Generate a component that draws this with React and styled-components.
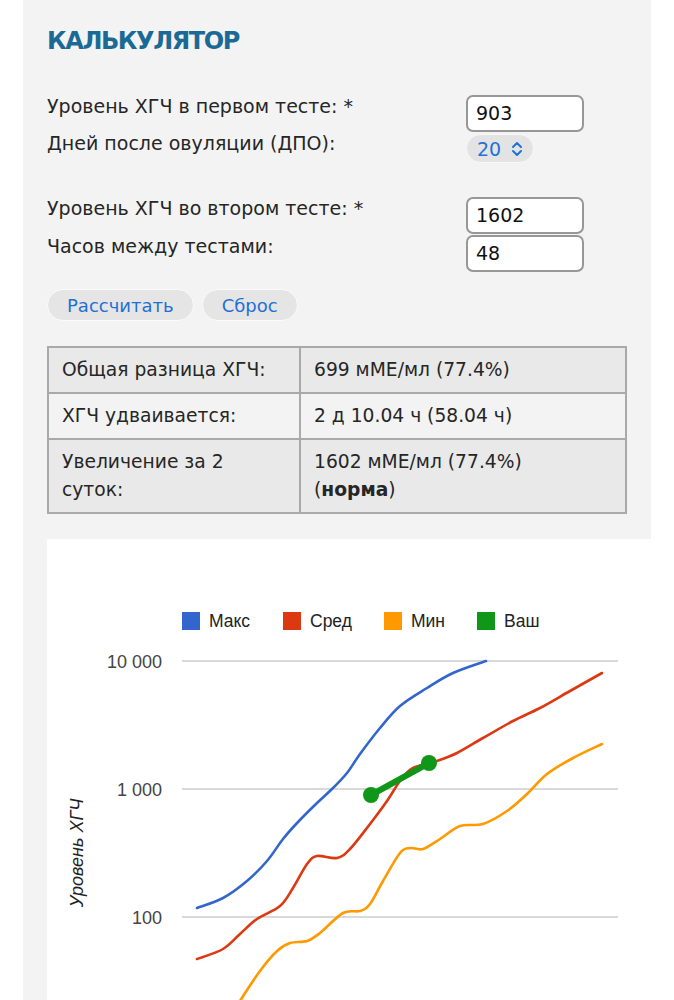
import React from 'react'
import styled, { createGlobalStyle } from 'styled-components'

const GlobalStyle = createGlobalStyle`
  body {
    margin: 0;
    background: #ffffff;
    font-family: "DejaVu Sans", Verdana, sans-serif;
    color: #262626;
  }
`

const Panel = styled.div`
  margin-left: 23px;
  width: 628px;
  background: #f3f3f3;
  padding: 26px 0 0 24px;
  box-sizing: border-box;
`

const Content = styled.div`
  padding-right: 24px;
`

const Title = styled.h2`
  margin: 0 0 39px;
  font-size: 24px;
  line-height: 30px;
  font-weight: bold;
  letter-spacing: -1.4px;
  color: #1b6a96;
`

const Group = styled.div`
  display: flex;
  flex-direction: column;
  gap: ${p => p.$gap || 0}px;
  margin-bottom: ${p => p.$after || 0}px;
`

const Row = styled.div`
  display: flex;
  align-items: flex-start;
`

const Label = styled.div`
  width: 419px;
  font-size: 19px;
  line-height: 22px;
  margin-top: ${p => p.$shift || 0}px;
`

const Input = styled.div`
  width: 118px;
  height: 37px;
  box-sizing: border-box;
  border: 2px solid #979797;
  border-radius: 7px;
  background: #fff;
  padding-left: 8px;
  font-size: 19px;
  line-height: 33px;
  color: #111;
`

const Select = styled.div`
  display: flex;
  align-items: center;
  gap: 10px;
  height: 29px;
  box-sizing: border-box;
  padding: 0 10px;
  border-radius: 15px;
  border: 1px solid #f8f8f8;
  background: #e3e3e3;
  color: #1f72d8;
  font-size: 19px;
`

const Buttons = styled.div`
  display: flex;
  gap: 8px;
  margin-bottom: 25px;
`

const Button = styled.button`
  height: 32px;
  margin: 0;
  padding: 0 19px;
  border-radius: 16px;
  border: 1px solid #fbfbfb;
  background: #e5e5e5;
  color: #1f70d6;
  font-family: "DejaVu Sans", Verdana, sans-serif;
  font-size: 18px;
`

const Table = styled.table`
  width: 580px;
  border-collapse: collapse;
  font-size: 18.7px;
  line-height: 28px;
`

const Cell = styled.td`
  border: 2px solid #a9a9a9;
  padding: ${p => (p.$first ? '8px 13px' : '8px 30px 8px 13px')};
  vertical-align: top;
  width: ${p => (p.$first ? '224px' : 'auto')};
  background: ${p => (p.$light ? '#f3f3f3' : '#e9e9e9')};
`

const ChartBox = styled.div`
  margin-top: 25px;
  background: #ffffff;
  height: 470px;
`

const ChartSvg = styled.svg`
  display: block;
  font-family: "Liberation Sans", Arial, sans-serif;
`

function smooth(pts) {
  let d = `M${pts[0][0]},${pts[0][1]}`
  for (let i = 0; i < pts.length - 1; i++) {
    const p0 = pts[i - 1] || pts[i]
    const p1 = pts[i]
    const p2 = pts[i + 1]
    const p3 = pts[i + 2] || p2
    const c1x = p1[0] + (p2[0] - p0[0]) / 6
    const c1y = p1[1] + (p2[1] - p0[1]) / 6
    const c2x = p2[0] - (p3[0] - p1[0]) / 6
    const c2y = p2[1] - (p3[1] - p1[1]) / 6
    d += ` C${c1x},${c1y} ${c2x},${c2y} ${p2[0]},${p2[1]}`
  }
  return d
}

const series = [
  {
    color: '#3366cc',
    pts: [[197,907],[223,897],[247,880],[267,860],[283,838],[298,821],[317,802],[333,787],[347,772],[360,753],[380,727],[400,705],[427,687],[453,672],[486,660]],
  },
  {
    color: '#dc3912',
    pts: [[197,958],[223,948],[240,933],[257,918],[280,905],[293,887],[307,863],[317,855],[337,857],[350,848],[370,823],[387,800],[400,780],[413,767],[437,760],[457,752],[483,737],[513,720],[540,707],[570,690],[602,672]],
  },
  {
    color: '#ff9900',
    pts: [[222,1030],[240,1000],[260,970],[277,950],[290,942],[307,940],[320,932],[343,912],[360,910],[370,903],[383,880],[400,852],[410,847],[423,848],[440,838],[460,825],[483,823],[507,810],[527,793],[547,773],[573,757],[602,743]],
  },
]

const legend = [
  { color: '#3366cc', label: 'Макс', x: 182 },
  { color: '#dc3912', label: 'Сред', x: 283 },
  { color: '#ff9900', label: 'Мин', x: 384 },
  { color: '#109618', label: 'Ваш', x: 477 },
]

const ticks = [
  { y: 660, label: '10 000' },
  { y: 788, label: '1 000' },
  { y: 916, label: '100' },
]

function Chart() {
  return (
    <ChartSvg width="604" height="470" viewBox="47 538 604 470">
      {legend.map(l => (
        <g key={l.label}>
          <rect x={l.x} y={611} width="18" height="18" fill={l.color} />
          <text x={l.x + 27} y={626} fontSize="17.5" fill="#222">{l.label}</text>
        </g>
      ))}
      {ticks.map(t => (
        <g key={t.label}>
          <line x1="182" x2="618" y1={t.y} y2={t.y} stroke="#cccccc" strokeWidth="1.5" />
          <text x="162" y={t.y + 6.5} fontSize="18" fill="#444" textAnchor="end">{t.label}</text>
        </g>
      ))}
      <text
        x="77"
        y="852"
        fontSize="18"
        fontStyle="italic"
        fill="#222"
        textAnchor="middle"
        transform="rotate(-90 77 852)"
        dy="6"
      >
        Уровень ХГЧ
      </text>
      {series.map(s => (
        <path key={s.color} d={smooth(s.pts)} fill="none" stroke={s.color} strokeWidth="2.6" strokeLinecap="round" />
      ))}
      <line x1="371" y1="794" x2="429" y2="762" stroke="#109618" strokeWidth="6" />
      <circle cx="371" cy="794" r="8" fill="#109618" />
      <circle cx="429" cy="762" r="8" fill="#109618" />
    </ChartSvg>
  )
}

function Chevrons() {
  return (
    <svg width="12" height="16" viewBox="0 0 12 16">
      <polyline points="2,6 6,2 10,6" fill="none" stroke="#1f72d8" strokeWidth="2" strokeLinecap="round" strokeLinejoin="round" />
      <polyline points="2,10 6,14 10,10" fill="none" stroke="#1f72d8" strokeWidth="2" strokeLinecap="round" strokeLinejoin="round" />
    </svg>
  )
}

export default function App() {
  return (
    <>
      <GlobalStyle />
      <Panel>
        <Content>
          <Title>КАЛЬКУЛЯТОР</Title>
          <Group $gap={2} $after={34}>
            <Row>
              <Label>Уровень ХГЧ в первом тесте: *</Label>
              <Input>903</Input>
            </Row>
            <Row>
              <Label $shift={-2}>Дней после овуляции (ДПО):</Label>
              <Select>20 <Chevrons /></Select>
            </Row>
          </Group>
          <Group $gap={1} $after={17}>
            <Row>
              <Label>Уровень ХГЧ во втором тесте: *</Label>
              <Input>1602</Input>
            </Row>
            <Row>
              <Label>Часов между тестами:</Label>
              <Input>48</Input>
            </Row>
          </Group>
          <Buttons>
            <Button>Рассчитать</Button>
            <Button>Сброс</Button>
          </Buttons>
          <Table>
            <tbody>
              <tr>
                <Cell $first>Общая разница ХГЧ:</Cell>
                <Cell>699 мМЕ/мл (77.4%)</Cell>
              </tr>
              <tr>
                <Cell $first $light>ХГЧ удваивается:</Cell>
                <Cell $light>2 д 10.04 ч (58.04 ч)</Cell>
              </tr>
              <tr>
                <Cell $first>Увеличение за 2 суток:</Cell>
                <Cell>1602 мМЕ/мл (77.4%) (<b>норма</b>)</Cell>
              </tr>
            </tbody>
          </Table>
        </Content>
        <ChartBox>
          <Chart />
        </ChartBox>
      </Panel>
    </>
  )
}
